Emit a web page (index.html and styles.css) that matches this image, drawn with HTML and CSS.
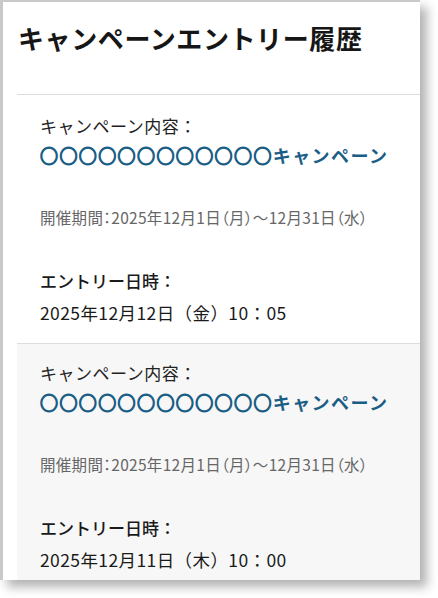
FILE: index.html
```html
<!DOCTYPE html>
<html lang="ja">
<head>
<meta charset="utf-8">
<link rel="stylesheet" href="styles.css">
</head>
<body>
<div class="frame">
  <div class="card">
    <h1 class="title">キャンペーンエントリー履歴</h1>
    <ul class="list">
      <li class="item">
        <p class="label">キャンペーン内容：</p>
        <a class="link" href="#"><span class="marks">○○○○○○○○○○○○</span>キャンペーン</a>
        <p class="period">開催期間：2025年12月1日（月）～12月31日（水）</p>
        <p class="entry-label">エントリー日時：</p>
        <p class="entry-date">2025年12月12日（金）10：05</p>
      </li>
      <li class="item alt">
        <p class="label">キャンペーン内容：</p>
        <a class="link" href="#"><span class="marks">○○○○○○○○○○○○</span>キャンペーン</a>
        <p class="period">開催期間：2025年12月1日（月）～12月31日（水）</p>
        <p class="entry-label">エントリー日時：</p>
        <p class="entry-date">2025年12月11日（木）10：00</p>
      </li>
    </ul>
  </div>
</div>
</body>
</html>
```
FILE: styles.css
```css
html, body {
  margin: 0;
  padding: 0;
  background: #ffffff;
}
body {
  width: 438px;
  height: 598px;
  overflow: hidden;
  font-family: "Noto Sans CJK JP", "Noto Sans", sans-serif;
  color: #1a1a1a;
}
.frame {
  border-top: 2px solid #c9c9c9;
  border-left: 3px solid #c9c9c9;
  width: 417px;
  height: 578px;
  box-shadow: 7px 7px 10px rgba(0, 0, 0, 0.3);
  background: #ffffff;
}
.card {
  width: 417px;
  height: 578px;
  overflow: hidden;
  background: #ffffff;
}
.title {
  margin: 0;
  padding: 17px 0 37px 15px;
  font-size: 26px;
  line-height: 38px;
  font-weight: 700;
  color: #161616;
  letter-spacing: 0.6px;
}
.list {
  list-style: none;
  margin: 0 0 0 14px;
  padding: 0;
}
.item {
  border-top: 1px solid #dddddd;
  padding: 19px 0 18px 23px;
  display: flex;
  flex-direction: column;
}
.item.alt {
  background: #f7f7f7;
  padding-top: 17px;
}
.item p {
  margin: 0;
}
.label {
  font-size: 17px;
  line-height: 24px;
  color: #222;
  letter-spacing: 0.5px;
}
.link {
  margin-top: 5px;
  font-size: 18px;
  line-height: 24px;
  font-weight: 700;
  color: #1a5e86;
  text-decoration: none;
  letter-spacing: 1.4px;
}
.marks {
  -webkit-text-stroke: 1.3px #1a5e86;
}
.period {
  margin-top: 40px !important;
  font-size: 15.5px;
  line-height: 20px;
  color: #666;
  font-feature-settings: "palt";
  letter-spacing: 0.3px;
}
.entry-label {
  margin-top: 42px !important;
  font-size: 17px;
  line-height: 24px;
  font-weight: 500;
  color: #1a1a1a;
}
.entry-date {
  margin-top: 8px !important;
  font-size: 17.5px;
  line-height: 24px;
  font-weight: 400;
  color: #1a1a1a;
  letter-spacing: 0.4px;
}
```
